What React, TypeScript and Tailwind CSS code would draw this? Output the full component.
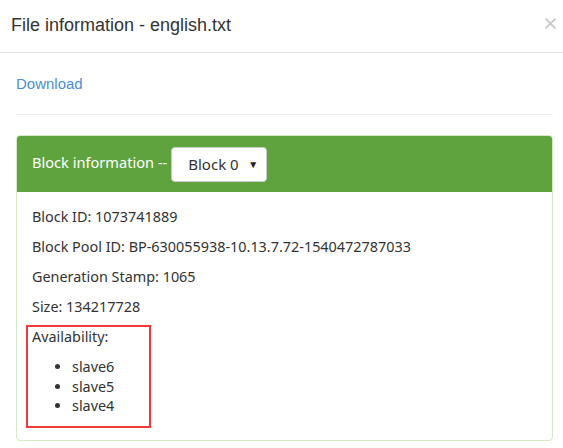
import React from "react";

export default function App() {
  const body = { fontFamily: '"Noto Sans", "Open Sans", sans-serif' };
  return (
    <div className="w-[563px] h-[448px] bg-white overflow-hidden text-[#333]" style={{ fontFamily: '"Liberation Sans", Arial, sans-serif' }}>
      <div className="flex items-center justify-between h-[53px] pl-[11px] pr-[7px] border-b border-[#e5e5e5]">
        <h4 className="text-[18px] leading-[20px] text-[#333] -mt-[3px]">File information - english.txt</h4>
        <svg width="11" height="11" viewBox="0 0 11 11" className="-mt-[5px]">
          <path d="M0.5 0.5 L10.5 10.5 M10.5 0.5 L0.5 10.5" stroke="#c4c4c4" strokeWidth="1.6" />
        </svg>
      </div>
      <div className="pl-[16px] pr-[10px] pt-[21px]">
        <a className="block text-[15px] leading-[20px] text-[#4a8fd4]">Download</a>
        <div className="mt-[20px] border-t border-[#eee]" />
        <div className="mt-[20px] border border-[#d6e9c6] rounded-[4px] overflow-hidden" style={body}>
          <div className="bg-[#5fa33e] h-[56px] flex items-center pl-[15px] gap-[4px]">
            <span className="text-white text-[14.6px] -mt-[2px]">Block information --</span>
            <div className="w-[96px] h-[35px] bg-white rounded-[4px] flex items-center justify-between pl-[16px] pr-[8px] border border-[#ccc]">
              <span className="text-[15px] text-[#333]">Block 0</span>
              <span className="text-[10px] text-[#222]">▼</span>
            </div>
          </div>
          <div className="px-[15px] pt-[15px] pb-[12px] text-[14.4px] text-[#333]">
            <p className="leading-[20px] mb-[10px]">Block ID: 1073741889</p>
            <p className="leading-[20px] mb-[10px]">Block Pool ID: BP-630055938-10.13.7.72-1540472787033</p>
            <p className="leading-[20px] mb-[10px]">Generation Stamp: 1065</p>
            <p className="leading-[20px] mb-[8px]">Size: 134217728</p>
            <div className="ml-[-6px] w-[125px] border-[2px] border-[#f03a3a] pl-[4px] pb-[10px] pt-[0px]">
              <p className="leading-[20px] mb-[10px]">Availability:</p>
              <ul className="list-disc pl-[40px] leading-[19.5px]">
                <li>slave6</li>
                <li>slave5</li>
                <li>slave4</li>
              </ul>
            </div>
          </div>
        </div>
      </div>
    </div>
  );
}
